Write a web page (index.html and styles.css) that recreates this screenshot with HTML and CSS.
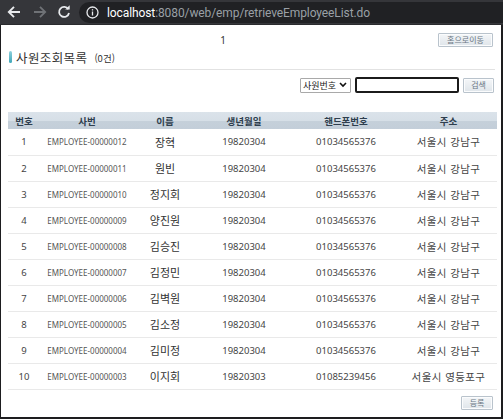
FILE: index.html
```html
<!DOCTYPE html>
<html lang="ko">
<head>
<meta charset="utf-8">
<title>retrieveEmployeeList</title>
<link rel="stylesheet" href="styles.css">
</head>
<body>
<div class="chrome">
  <span class="nav back">
    <svg width="14" height="14" viewBox="0 0 14 14"><path d="M13 7H2.5M7 1.8L1.8 7 7 12.2" fill="none" stroke="#e8eaed" stroke-width="1.9"/></svg>
  </span>
  <span class="nav fwd">
    <svg width="14" height="14" viewBox="0 0 14 14"><path d="M1 7h10.5M7 1.8L12.2 7 7 12.2" fill="none" stroke="#6f7276" stroke-width="1.8"/></svg>
  </span>
  <span class="nav reload">
    <svg width="14" height="14" viewBox="0 0 14 14"><path d="M11.3 4.2A5 5 0 1 0 12 8" fill="none" stroke="#e8eaed" stroke-width="1.8"/><path d="M8.2 4.6h4.5V0.2z" fill="#e8eaed"/></svg>
  </span>
  <div class="omnibox">
    <svg class="info" width="13" height="13" viewBox="0 0 13 13"><circle cx="6.5" cy="6.5" r="5.5" fill="none" stroke="#e8eaed" stroke-width="1.3"/><rect x="5.85" y="5.5" width="1.3" height="4" fill="#e8eaed"/><rect x="5.85" y="3.2" width="1.3" height="1.3" fill="#e8eaed"/></svg>
    <span class="host">localhost</span><span class="path">:8080/web/emp/retrieveEmployeeList.do</span>
  </div>
</div>
<div class="page">
  <div class="toprow">
    <div class="paging">1</div>
    <button class="btn">홈으로이동</button>
  </div>
  <div class="title">
    <span class="marker"></span>
    <h2>사원조회목록</h2>
    <span class="count">(0건)</span>
  </div>
  <div class="search">
    <div class="select">사원번호
      <svg width="8" height="6" viewBox="0 0 8 6"><path d="M1 1l3 3 3-3" fill="none" stroke="#111" stroke-width="1.6"/></svg>
    </div>
    <div class="input"></div>
    <button class="btn">검색</button>
  </div>
  <table class="list">
    <colgroup>
      <col class="c1"><col class="c2"><col class="c3"><col class="c4"><col class="c5"><col class="c6">
    </colgroup>
    <thead>
      <tr><th>번호</th><th>사번</th><th>이름</th><th>생년월일</th><th>핸드폰번호</th><th>주소</th></tr>
    </thead>
    <tbody>
      <tr><td class="num">1</td><td class="id">EMPLOYEE-00000012</td><td class="name">장혁</td><td class="num">19820304</td><td class="num">01034565376</td><td class="addr">서울시 강남구</td></tr>
      <tr><td class="num">2</td><td class="id">EMPLOYEE-00000011</td><td class="name">원빈</td><td class="num">19820304</td><td class="num">01034565376</td><td class="addr">서울시 강남구</td></tr>
      <tr><td class="num">3</td><td class="id">EMPLOYEE-00000010</td><td class="name">정지회</td><td class="num">19820304</td><td class="num">01034565376</td><td class="addr">서울시 강남구</td></tr>
      <tr><td class="num">4</td><td class="id">EMPLOYEE-00000009</td><td class="name">양진원</td><td class="num">19820304</td><td class="num">01034565376</td><td class="addr">서울시 강남구</td></tr>
      <tr><td class="num">5</td><td class="id">EMPLOYEE-00000008</td><td class="name">김승진</td><td class="num">19820304</td><td class="num">01034565376</td><td class="addr">서울시 강남구</td></tr>
      <tr><td class="num">6</td><td class="id">EMPLOYEE-00000007</td><td class="name">김정민</td><td class="num">19820304</td><td class="num">01034565376</td><td class="addr">서울시 강남구</td></tr>
      <tr><td class="num">7</td><td class="id">EMPLOYEE-00000006</td><td class="name">김벽원</td><td class="num">19820304</td><td class="num">01034565376</td><td class="addr">서울시 강남구</td></tr>
      <tr><td class="num">8</td><td class="id">EMPLOYEE-00000005</td><td class="name">김소정</td><td class="num">19820304</td><td class="num">01034565376</td><td class="addr">서울시 강남구</td></tr>
      <tr><td class="num">9</td><td class="id">EMPLOYEE-00000004</td><td class="name">김미정</td><td class="num">19820304</td><td class="num">01034565376</td><td class="addr">서울시 강남구</td></tr>
      <tr><td class="num">10</td><td class="id">EMPLOYEE-00000003</td><td class="name">이지회</td><td class="num">19820303</td><td class="num">01085239456</td><td class="addr">서울시 영등포구</td></tr>
    </tbody>
  </table>
  <div class="bottom">
    <button class="btn">등록</button>
  </div>
</div>
</body>
</html>
```

FILE: styles.css
```css
* { box-sizing: border-box; }
html, body {
  margin: 0;
  padding: 0;
  width: 503px;
  height: 419px;
  overflow: hidden;
  background: #fff;
  font-family: "Noto Sans", "Noto Sans CJK KR", sans-serif;
}
.chrome {
  height: 25px;
  background: #35363a;
  display: flex;
  align-items: center;
  padding-left: 7px;
  border-bottom: 1px solid #2a2b2e;
}
.nav {
  height: 25px;
  display: flex;
  align-items: center;
  justify-content: flex-start;
}
.nav.back { width: 26px; }
.nav.fwd { width: 24px; }
.nav.reload { width: 22px; }
.omnibox {
  flex: 1;
  height: 21px;
  margin-top: 1px;
  background: #202124;
  border-radius: 11px 0 0 11px;
  display: flex;
  align-items: center;
  padding-left: 7px;
  font-family: Roboto, "Noto Sans", sans-serif;
  font-size: 12px;
  letter-spacing: -0.1px;
}
.info { margin-right: 8px; }
.host { color: #fff; }
.path { color: #9aa0a6; }

.page {
  height: 394px;
  border-left: 1px solid #1d1d1f;
  border-right: 2px solid #1d1d1f;
  border-bottom: 2px solid #1d1d1f;
  padding: 8px 6px 0 7px;
  display: flex;
  flex-direction: column;
}
.toprow {
  display: flex;
  align-items: center;
  height: 14px;
}
.paging {
  flex: 1;
  text-align: center;
  font-size: 10px;
  color: #333;
}
.btn {
  height: 14px;
  padding: 0 5px;
  font-family: "Noto Sans CJK KR", sans-serif;
  font-size: 8px;
  line-height: 12px;
  color: #6a7784;
  background: linear-gradient(#f4f6f8, #dfe5ea);
  border: 1px solid #b9c3cc;
  border-radius: 1px;
  box-shadow: inset 0 0 0 1px #fbfcfd;
}
.toprow .btn { width: 55px; margin-right: 2px; }
.title {
  display: flex;
  align-items: center;
  height: 21px;
  margin-top: 2px;
  padding-left: 1px;
  padding-bottom: 4px;
  border-bottom: 1px solid #e2e2e2;
}
.marker {
  width: 3px;
  height: 12px;
  border-radius: 2px;
  background: linear-gradient(#8fd0dc, #3fa7b9);
  margin-right: 4px;
}
.title h2 {
  margin: 0;
  font-family: "Noto Sans CJK KR", sans-serif;
  font-size: 12.5px;
  font-weight: 400;
  color: #333;
  letter-spacing: 0.4px;
}
.count {
  margin-left: 7px;
  margin-top: 2px;
  font-family: "Noto Sans CJK KR", sans-serif;
  font-size: 9.5px;
  color: #333;
}
.search {
  display: flex;
  justify-content: flex-end;
  align-items: center;
  margin-top: 7px;
  gap: 4px;
  padding-right: 1px;
}
.select {
  width: 51px;
  height: 15px;
  border: 1px solid #a9a9a9;
  background: #fff;
  display: flex;
  align-items: center;
  justify-content: space-between;
  padding: 0 3px 0 2px;
  font-family: "Noto Sans CJK KR", sans-serif;
  font-size: 9px;
  color: #222;
  border-radius: 1px;
}
.input {
  width: 104px;
  height: 16px;
  border: 2px solid #1b1b1b;
  border-radius: 2px;
  background: #fff;
}
.search .btn { width: 31px; height: 15px; }
.list {
  margin-top: 19px;
  width: 489px;
  border-collapse: collapse;
  table-layout: fixed;
}
.c1 { width: 32px; }
.c2 { width: 94px; }
.c3 { width: 62px; }
.c4 { width: 96px; }
.c5 { width: 108px; }
.c6 { width: 97px; }
.list th {
  height: 17px;
  padding: 0;
  background: linear-gradient(#dbe3ea 0%, #d6dfe7 50%, #c5d0da 55%, #c3ced9 100%);
  font-family: "Noto Sans CJK KR", sans-serif;
  font-size: 9.5px;
  font-weight: 700;
  color: #2e3e4e;
  text-align: center;
}
.list td {
  height: 26px;
  padding: 0;
  text-align: center;
  border-bottom: 1px solid #e9e9e9;
  color: #444;
  font-size: 9.5px;
}
.list td.id {
  font-size: 8px;
  color: #555;
}
.list td.name {
  font-family: "Noto Sans CJK KR", sans-serif;
  font-size: 11px;
  color: #333;
}
.list td.addr {
  font-family: "Noto Sans CJK KR", sans-serif;
  font-size: 10.5px;
  color: #444;
  letter-spacing: 0.4px;
}
.bottom {
  display: flex;
  justify-content: flex-end;
  margin-top: 6px;
  padding-right: 2px;
}
.bottom .btn { width: 32px; }
```
